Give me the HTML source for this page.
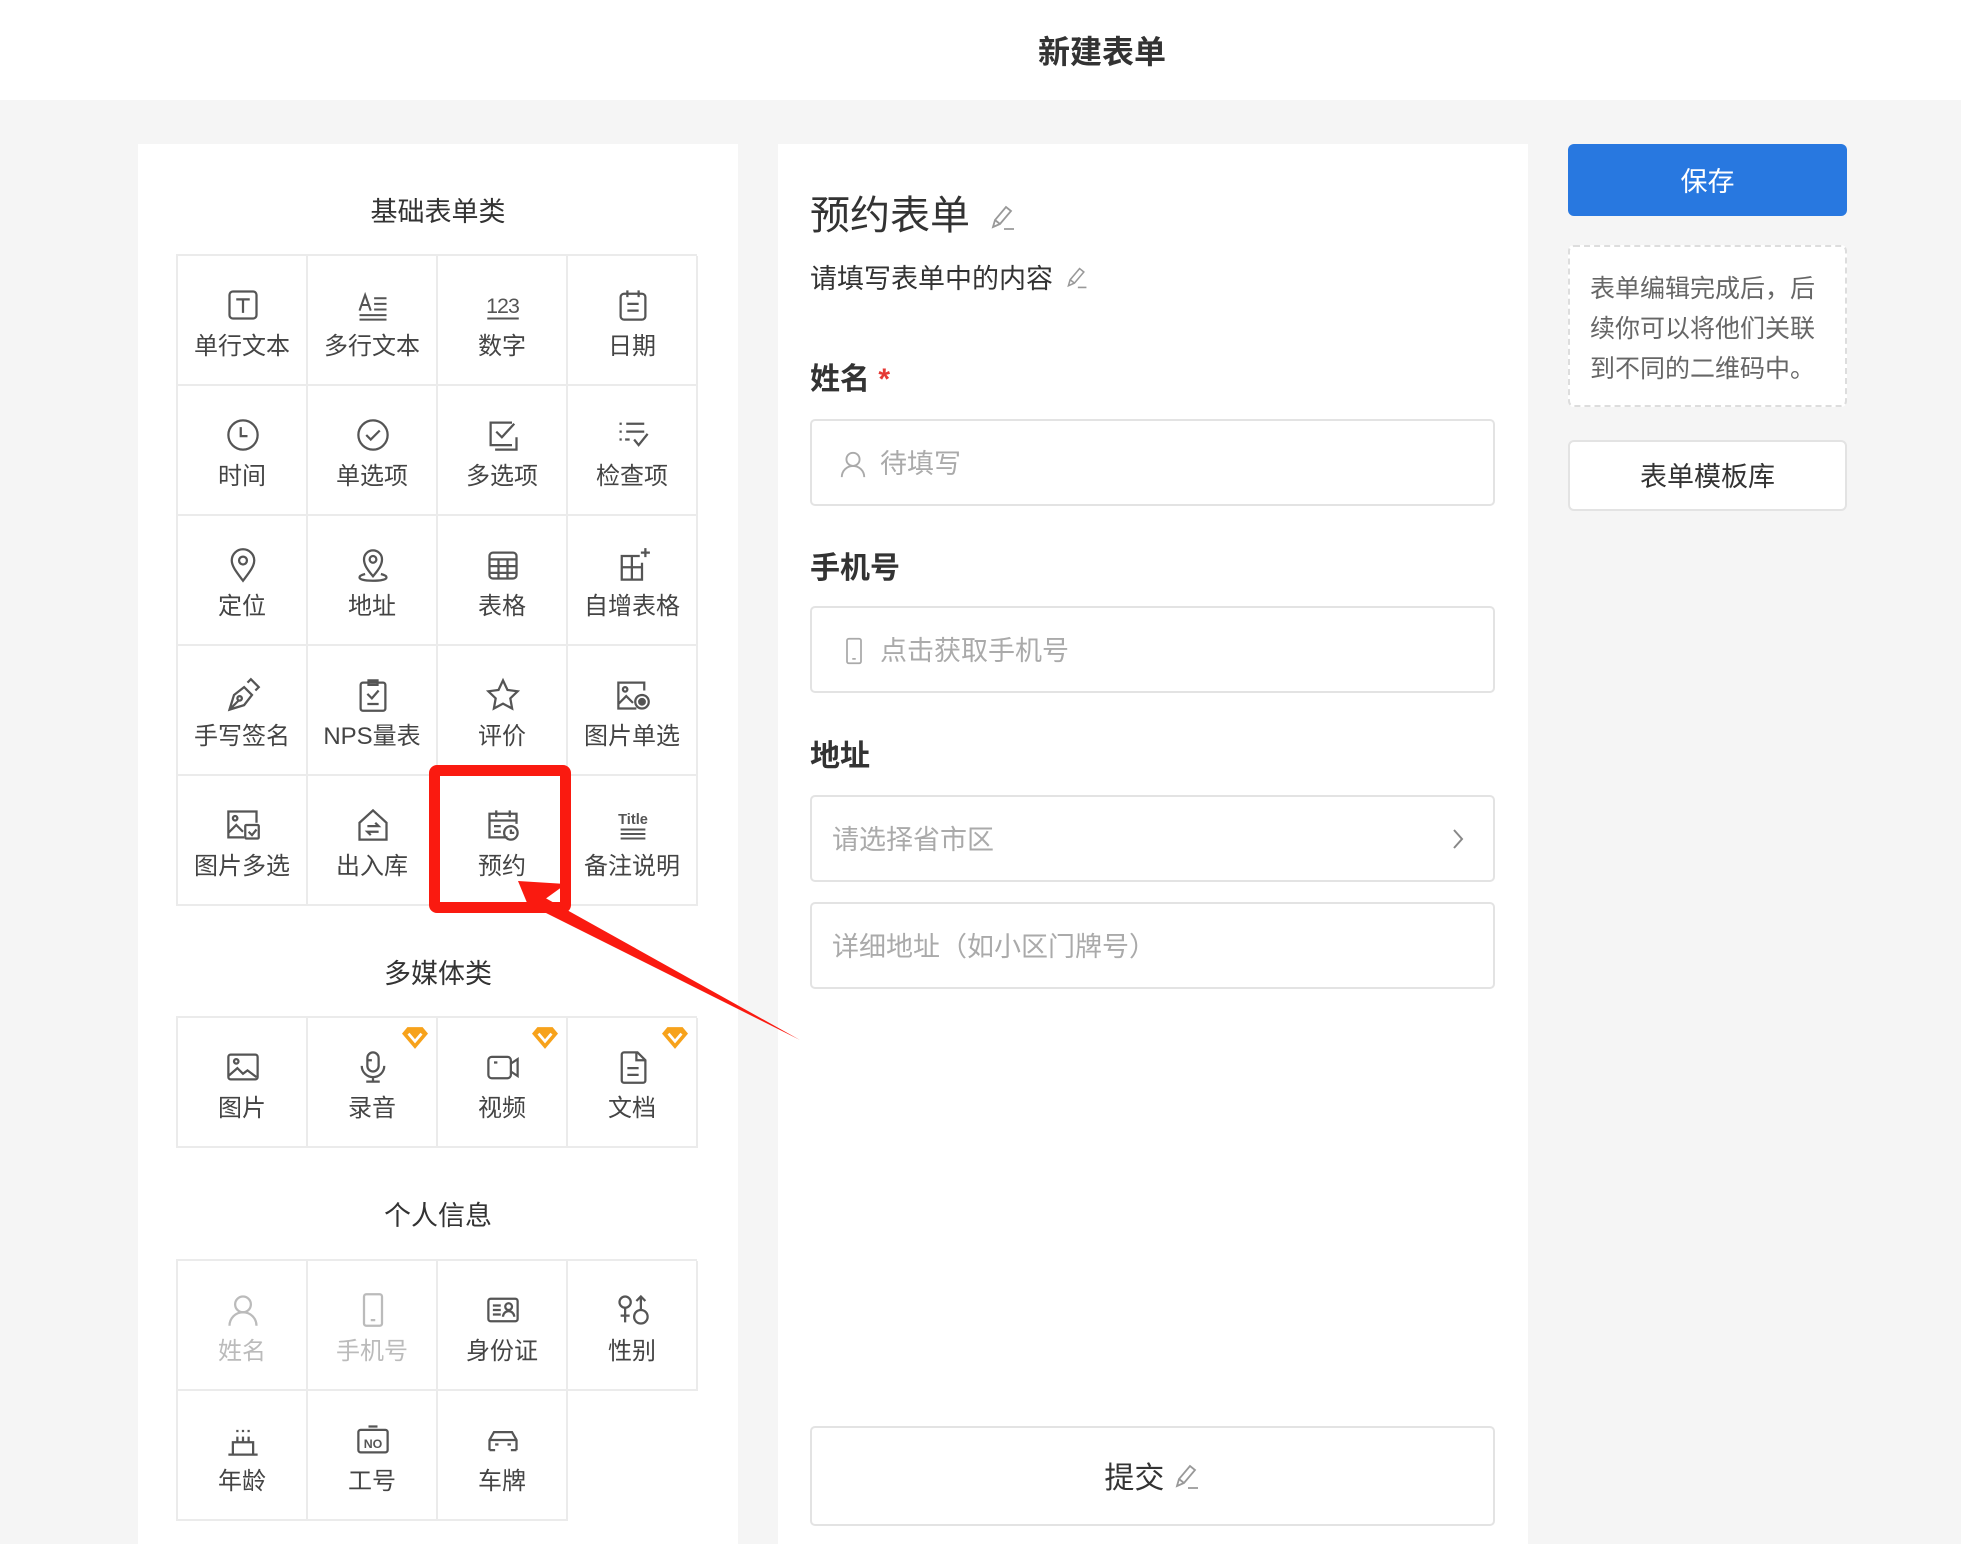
<!DOCTYPE html>
<html><head><meta charset="utf-8">
<style>
*{margin:0;padding:0;box-sizing:border-box}
body{width:1961px;height:1539px;background:#f5f5f5;font-family:"Liberation Sans","Noto Sans CJK SC",sans-serif;position:relative;overflow:hidden;color:#333}
.hdr{position:absolute;left:0;top:0;width:1961px;height:100px;background:#fff}
.hdr div{position:absolute;left:1002px;width:200px;top:2px;text-align:center;line-height:100px;font-size:32px;font-weight:bold;color:#333}
.panel{position:absolute;background:#fff}
.sec{position:absolute;left:0;width:600px;text-align:center;font-size:27px;color:#333}
.grid{position:absolute;left:38px;width:521px;border-top:2px solid #ebebeb;border-left:2px solid #ebebeb}
.c{position:absolute;width:130px;height:130px;border-right:2px solid #ebebeb;border-bottom:2px solid #ebebeb;text-align:center}
.c svg.i{position:absolute;left:47px;top:31px;width:36px;height:36px}
.c span{position:absolute;left:0;width:128px;top:73px;font-size:24px;line-height:36px;color:#444;white-space:nowrap}
.c.g span{color:#bbb}
.c svg.dia{position:absolute;right:8px;top:8px;width:26px;height:24px}
.lab{position:absolute;left:32px;font-size:30px;font-weight:bold;color:#333}
.inp{position:absolute;left:32px;width:685px;height:87px;border:2px solid #e3e3e3;border-radius:5px;font-size:27px;color:#aaa;line-height:83px}
.btn{position:absolute;left:1568px;width:279px;border-radius:6px;text-align:center}
</style></head><body>
<div class="hdr"><div>新建表单</div></div>

<div class="panel" style="left:138px;top:144px;width:600px;height:1400px">
  <div class="sec" style="top:48px;line-height:40px">基础表单类</div>
  <div class="grid" style="top:110px;height:652px">
    <div class="c" style="left:0;top:0"><svg class="i" viewBox="0 0 32 32" fill="none" stroke="#555" stroke-width="2"><rect x="4" y="4" width="24" height="24" rx="3"/><path d="M10 11h12M16 11v12"/></svg><span>单行文本</span></div>
    <div class="c" style="left:130px;top:0"><svg class="i" viewBox="0 0 32 32" fill="none" stroke="#555" stroke-width="1.8"><path d="M4 21l5-14 5 14M6 16h6M17 10h11M17 15h11M17 20h11M4 25h24M4 29h24"/></svg><span>多行文本</span></div>
    <div class="c" style="left:260px;top:0"><svg class="i" viewBox="0 0 32 32" fill="none" stroke="#555"><text x="16" y="23" font-size="19" text-anchor="middle" fill="#555" stroke="none" font-family="Liberation Sans" textLength="30">123</text><path d="M2 28h28" stroke-width="1.8"/></svg><span>数字</span></div>
    <div class="c" style="left:390px;top:0"><svg class="i" viewBox="0 0 32 32" fill="none" stroke="#555" stroke-width="2"><rect x="5" y="6" width="22" height="23" rx="3"/><path d="M11 3v6M21 3v6M11 15h10M11 21h10"/></svg><span>日期</span></div>
    <div class="c" style="left:0;top:130px"><svg class="i" viewBox="0 0 32 32" fill="none" stroke="#555" stroke-width="2"><circle cx="16" cy="16" r="13"/><path d="M14 9v8h6"/></svg><span>时间</span></div>
    <div class="c" style="left:130px;top:130px"><svg class="i" viewBox="0 0 32 32" fill="none" stroke="#555" stroke-width="2"><circle cx="16" cy="16" r="13"/><path d="M10 16l4 4 8-8"/></svg><span>单选项</span></div>
    <div class="c" style="left:260px;top:130px"><svg class="i" viewBox="0 0 32 32" fill="none" stroke="#555" stroke-width="2"><path d="M24 5H5v20h19"/><path d="M10 13l5 5 11-12M28 18v11H9"/></svg><span>多选项</span></div>
    <div class="c" style="left:390px;top:130px"><svg class="i" viewBox="0 0 32 32" fill="none" stroke="#555" stroke-width="2"><path d="M4 6h2M10 6h16M4 13h2M10 13h16M4 20h2M9 20h4M17 20l4 5 8-10"/></svg><span>检查项</span></div>
    <div class="c" style="left:0;top:260px"><svg class="i" viewBox="0 0 32 32" fill="none" stroke="#555" stroke-width="2"><path d="M16 30C10 22 6 17 6 12a10 10 0 0 1 20 0c0 5-4 10-10 18z"/><circle cx="16" cy="12" r="3.5"/></svg><span>定位</span></div>
    <div class="c" style="left:130px;top:260px"><svg class="i" viewBox="0 0 32 32" fill="none" stroke="#555" stroke-width="2"><path d="M16 26C11 20 8 16 8 11a8 8 0 0 1 16 0c0 5-3 9-8 15z"/><circle cx="16" cy="11" r="3"/><path d="M9 24c-4 1-5 2-5 3 0 2 5 3 12 3s12-1 12-3c0-1-1-2-5-3"/></svg><span>地址</span></div>
    <div class="c" style="left:260px;top:260px"><svg class="i" viewBox="0 0 32 32" fill="none" stroke="#555" stroke-width="2"><rect x="4" y="5" width="24" height="23" rx="3"/><path d="M4 11h24M4 17h24M4 23h24M12 11v17M20 11v17"/></svg><span>表格</span></div>
    <div class="c" style="left:390px;top:260px"><svg class="i" viewBox="0 0 32 32" fill="none" stroke="#555" stroke-width="2"><path d="M22 8H6v21h18V14M6 18h18M15 8v21M27 1v8M23 5h8"/></svg><span>自增表格</span></div>
    <div class="c" style="left:0;top:390px"><svg class="i" viewBox="0 0 32 32" fill="none" stroke="#555" stroke-width="2"><path d="M4 29l4-13 9-7 7 7-7 9z M4 29l8-8M20 5l3-3 7 7-3 3"/><circle cx="13" cy="19" r="2"/></svg><span>手写签名</span></div>
    <div class="c" style="left:130px;top:390px"><svg class="i" viewBox="0 0 32 32" fill="none" stroke="#555" stroke-width="2"><rect x="5" y="5" width="22" height="25" rx="2"/><path d="M12 3h8v4h-8zM11 15l4 4 6-7M11 24h10"/></svg><span>NPS量表</span></div>
    <div class="c" style="left:260px;top:390px"><svg class="i" viewBox="0 0 32 32" fill="none" stroke="#555" stroke-width="2"><path d="M16 3l4 8.5 9 1.2-6.5 6.3 1.6 9L16 23.7 7.9 28l1.6-9L3 12.7l9-1.2z"/></svg><span>评价</span></div>
    <div class="c" style="left:390px;top:390px"><svg class="i" viewBox="0 0 32 32" fill="none" stroke="#555" stroke-width="2"><path d="M26 12V5H3v23h16"/><circle cx="9" cy="11" r="2"/><path d="M3 24l7-7 6 6"/><circle cx="24" cy="22" r="6"/><circle cx="24" cy="22" r="2.5" fill="#555"/></svg><span>图片单选</span></div>
    <div class="c" style="left:0;top:520px"><svg class="i" viewBox="0 0 32 32" fill="none" stroke="#555" stroke-width="2"><path d="M28 14V4H3v23h14"/><circle cx="9" cy="10" r="2"/><path d="M3 23l7-7 6 6"/><rect x="18" y="16" width="12" height="12" rx="1"/><path d="M21 22l3 3 4-5"/></svg><span>图片多选</span></div>
    <div class="c" style="left:130px;top:520px"><svg class="i" viewBox="0 0 32 32" fill="none" stroke="#555" stroke-width="2"><path d="M4 14L16 3l12 11v15H4z"/><path d="M11 17h10l-3-3M21 22H11l3 3"/></svg><span>出入库</span></div>
    <div class="c" style="left:260px;top:520px"><svg class="i" viewBox="0 0 32 32" fill="none" stroke="#555" stroke-width="2"><path d="M20 27H4V6h24v9M4 12h24M10 3v6M22 3v6M8 17h6M8 22h6"/><circle cx="23" cy="23" r="6"/><path d="M23 20v3h3"/></svg><span>预约</span></div>
    <div class="c" style="left:390px;top:520px"><svg class="i" viewBox="0 0 32 32" fill="none" stroke="#555"><text x="16" y="15" font-size="13" text-anchor="middle" fill="#555" stroke="none" font-weight="bold" font-family="Liberation Sans">Title</text><path d="M5 20h22M5 24h22M5 28h22" stroke-width="1.8"/></svg><span>备注说明</span></div>
  </div>

  <div class="sec" style="top:810px;line-height:40px">多媒体类</div>
  <div class="grid" style="top:872px;height:132px">
    <div class="c" style="left:0;top:0"><svg class="i" viewBox="0 0 32 32" fill="none" stroke="#555" stroke-width="2"><rect x="3" y="5" width="26" height="22" rx="2"/><circle cx="10" cy="11" r="2"/><path d="M3 24l8-7 5 5 4-3 8 6"/></svg><span>图片</span></div>
    <div class="c" style="left:130px;top:0"><svg class="i" viewBox="0 0 32 32" fill="none" stroke="#555" stroke-width="2"><rect x="11" y="3" width="10" height="17" rx="5"/><path d="M11 10h4M6 15a10 10 0 0 0 20 0M16 25v4M10 29h12"/></svg><span>录音</span><svg class="dia" viewBox="0 0 24 22"><path d="M5 1h14l5 6-12 14L0 7z" fill="#f7a21b"/><path d="M6 7l6 7 6-7" stroke="#fff" stroke-width="2.5" fill="none"/></svg></div>
    <div class="c" style="left:260px;top:0"><svg class="i" viewBox="0 0 32 32" fill="none" stroke="#555" stroke-width="2"><rect x="3" y="7" width="20" height="19" rx="3"/><path d="M23 13l6-4v15l-6-4M8 12h3"/></svg><span>视频</span><svg class="dia" viewBox="0 0 24 22"><path d="M5 1h14l5 6-12 14L0 7z" fill="#f7a21b"/><path d="M6 7l6 7 6-7" stroke="#fff" stroke-width="2.5" fill="none"/></svg></div>
    <div class="c" style="left:390px;top:0"><svg class="i" viewBox="0 0 32 32" fill="none" stroke="#555" stroke-width="2"><path d="M6 5a2 2 0 0 1 2-2h12l7 7v18a2 2 0 0 1-2 2H8a2 2 0 0 1-2-2zM19 3v7h8M11 17h10M11 23h10"/></svg><span>文档</span><svg class="dia" viewBox="0 0 24 22"><path d="M5 1h14l5 6-12 14L0 7z" fill="#f7a21b"/><path d="M6 7l6 7 6-7" stroke="#fff" stroke-width="2.5" fill="none"/></svg></div>
  </div>

  <div class="sec" style="top:1052px;line-height:40px">个人信息</div>
  <div class="grid" style="top:1115px;height:262px;border-left:none;border-top:none">
    <div style="position:absolute;left:0;top:0;width:521px;height:2px;background:#ebebeb"></div>
    <div style="position:absolute;left:0;top:0;width:2px;height:262px;background:#ebebeb"></div>
    <div class="c g" style="left:2px;top:2px"><svg class="i" viewBox="0 0 32 32" fill="none" stroke="#bbb" stroke-width="2"><circle cx="16" cy="11" r="7"/><path d="M4 30a12 12 0 0 1 24 0"/></svg><span>姓名</span></div>
    <div class="c g" style="left:132px;top:2px"><svg class="i" viewBox="0 0 32 32" fill="none" stroke="#bbb" stroke-width="2"><rect x="8" y="2" width="16" height="28" rx="2"/><path d="M14 25h4"/></svg><span>手机号</span></div>
    <div class="c" style="left:262px;top:2px"><svg class="i" viewBox="0 0 32 32" fill="none" stroke="#555" stroke-width="2"><rect x="3" y="6" width="26" height="20" rx="2"/><path d="M7 12h7M7 16h7M7 20h7"/><circle cx="21" cy="13" r="3"/><path d="M16 22a5 5 0 0 1 10 0"/></svg><span>身份证</span></div>
    <div class="c" style="left:392px;top:2px"><svg class="i" viewBox="0 0 32 32" fill="none" stroke="#555" stroke-width="2"><circle cx="9" cy="9" r="5"/><path d="M9 14v13M5 21h8"/><circle cx="23" cy="22" r="6"/><path d="M23 16V4M19 8l4-4 4 4"/></svg><span>性别</span></div>
    <div class="c" style="left:2px;top:132px"><svg class="i" viewBox="0 0 32 32" fill="none" stroke="#555" stroke-width="2"><path d="M7 28V18h18v10M3 29h26M11 13v5M16 13v5M21 13v5M11 7v2M16 7v2M21 7v2"/></svg><span>年龄</span></div>
    <div class="c" style="left:132px;top:132px"><svg class="i" viewBox="0 0 32 32" fill="none" stroke="#555" stroke-width="2"><rect x="3" y="7" width="26" height="20" rx="2"/><path d="M12 4h8"/><text x="16" y="23" font-size="11" text-anchor="middle" fill="#555" stroke="none" font-weight="bold" font-family="Liberation Sans">NO</text></svg><span>工号</span></div>
    <div class="c" style="left:262px;top:132px"><svg class="i" viewBox="0 0 32 32" fill="none" stroke="#555" stroke-width="2"><path d="M4 25V16l4-7h16l4 7v9M4 16h24M4 25h5M23 25h5M9 20h3M20 20h3"/></svg><span>车牌</span></div>
  </div>
</div>

<div class="panel" style="left:778px;top:144px;width:750px;height:1400px">
  <div style="position:absolute;left:32px;top:44px;font-size:40px;color:#333;line-height:56px">预约表单 <svg width="28" height="30" viewBox="0 0 28 30" style="vertical-align:-4px;margin-left:8px" fill="none" stroke="#999" stroke-width="1.8"><path d="M4 24l2-7 11-13 5 4-11 13zM6 17l5 4M15 26h10"/></svg></div>
  <div style="position:absolute;left:32px;top:115px;font-size:27px;color:#333;line-height:40px">请填写表单中的内容 <svg width="24" height="26" viewBox="0 0 28 30" style="vertical-align:-3px;margin-left:4px" fill="none" stroke="#999" stroke-width="1.8"><path d="M4 24l2-7 11-13 5 4-11 13zM6 17l5 4M15 26h10"/></svg></div>
  <div class="lab" style="top:214px;line-height:44px">姓名 <span style="color:#e53935">*</span></div>
  <div class="inp" style="top:275px;padding-left:68px;line-height:87px"><svg style="position:absolute;left:26px;top:28px" width="30" height="30" viewBox="0 0 32 32" fill="none" stroke="#aaa" stroke-width="2"><circle cx="16" cy="11" r="7"/><path d="M4 30a12 12 0 0 1 24 0"/></svg>待填写</div>
  <div class="lab" style="top:403px;line-height:44px">手机号</div>
  <div class="inp" style="top:462px;padding-left:68px;line-height:87px"><svg style="position:absolute;left:28px;top:28px" width="28" height="30" viewBox="0 0 32 32" fill="none" stroke="#aaa" stroke-width="2"><rect x="8" y="2" width="16" height="28" rx="2"/><path d="M14 25h4"/></svg>点击获取手机号</div>
  <div class="lab" style="top:591px;line-height:44px">地址</div>
  <div class="inp" style="top:651px;padding-left:20px;line-height:87px">请选择省市区<svg style="position:absolute;right:28px;top:31px" width="14" height="22" viewBox="0 0 14 22" fill="none" stroke="#888" stroke-width="2"><path d="M3 2l8 9-8 9"/></svg></div>
  <div class="inp" style="top:758px;padding-left:20px;line-height:87px">详细地址（如小区门牌号）</div>
  <div class="inp" style="top:1282px;height:100px;line-height:102px;text-align:center;color:#333;font-size:30px">提交 <svg width="28" height="30" viewBox="0 0 28 30" style="vertical-align:-4px" fill="none" stroke="#999" stroke-width="1.8"><path d="M4 24l2-7 11-13 5 4-11 13zM6 17l5 4M15 26h10"/></svg></div>
</div>

<div class="btn" style="top:144px;height:72px;background:#2878e0;color:#fff;font-size:27px;line-height:76px">保存</div>
<div class="btn" style="top:245px;height:162px;border:2px dashed #ddd;background:#fff;text-align:left;padding:22px 20px;font-size:25px;line-height:40px;color:#666">表单编辑完成后，后续你可以将他们关联到不同的二维码中。</div>
<div class="btn" style="top:440px;height:71px;border:2px solid #e3e3e3;background:#fff;font-size:27px;line-height:71px;color:#333">表单模板库</div>

<div style="position:absolute;left:429px;top:765px;width:142px;height:148px;border:11px solid #fa1a10;border-radius:8px"></div>
<svg style="position:absolute;left:0;top:0" width="1961" height="1539">
  <polygon points="800,1040 540,895 530,905" fill="#fa1a10"/>
  <polygon points="518,881 566,884 530,910" fill="#fa1a10"/>
</svg>
</body></html>
